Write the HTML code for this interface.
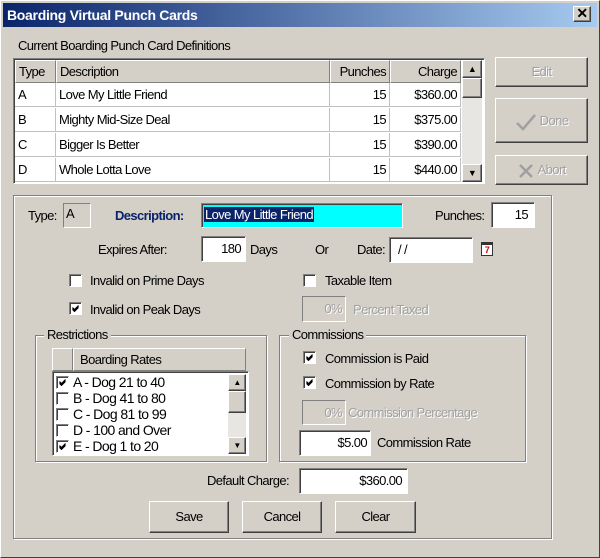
<!DOCTYPE html>
<html><head><style>
*{box-sizing:border-box;margin:0;padding:0}
body{width:600px;height:558px;background:#d4d0c8;font-family:"Liberation Sans",sans-serif;font-size:13px;letter-spacing:-0.6px;color:#000;position:relative;overflow:hidden}
.a{position:absolute;white-space:nowrap}
.win{position:absolute;left:0;top:0;width:600px;height:558px;border:1px solid #fff;border-right-color:#404040;border-bottom-color:#404040}
.title{left:3px;top:3px;width:594px;height:24px;background:linear-gradient(90deg,#0a246a,#a6caf0);color:#fff;font-weight:bold;font-size:14px;line-height:24px;padding-left:4px;letter-spacing:-0.3px}
.btn{position:absolute;background:#d4d0c8;border:1px solid;border-color:#fff #404040 #404040 #fff;box-shadow:inset -1px -1px #808080;text-align:center}
.sunk{position:absolute;background:#fff;border:1px solid;border-color:#808080 #fff #fff #808080;box-shadow:inset 1px 1px #404040}
.grp{position:absolute;border:1px solid #808080;box-shadow:1px 1px #fff,inset 1px 1px #fff}
.cb{position:absolute;width:13px;height:13px;background:#fff;border:1px solid;border-color:#808080 #fff #fff #808080;box-shadow:inset 1px 1px #404040}
.cb svg{position:absolute;left:2px;top:2px}
.dis{color:#a0a0a0;text-shadow:1px 1px #fff}
.cell{position:absolute;height:24px;line-height:24px;padding:0 3px;border-right:1px solid #c0c0c0;border-bottom:1px solid #c0c0c0}
.hd{position:absolute;height:23px;line-height:22px;padding:0 3px;background:#d4d0c8;border:1px solid;border-color:#fff #808080 #808080 #fff}
.li{position:absolute;left:56px;width:170px;height:16px;line-height:16px;font-size:14px;white-space:nowrap}
.li .cb{position:absolute;left:0;top:2px}
.li span{position:absolute;left:17px;top:0}
</style></head><body>
<svg width="0" height="0" style="position:absolute"><defs><path id="ck" d="M0.5 3.5 L2.5 5.5 L6.5 1.5 M0.5 4.5 L2.5 6.5 L6.5 2.5 M0.5 2.5 L2.5 4.5 L6.5 0.5" stroke="#000" fill="none" stroke-width="1"/></defs></svg>
<div class="win"></div>
<div class="a title">Boarding Virtual Punch Cards</div>
<div class="btn" style="left:573px;top:6px;width:18px;height:16px;font-size:14px;line-height:13px;font-weight:bold">✕</div>

<div class="a" style="left:18px;top:38px">Current Boarding Punch Card Definitions</div>
<div class="sunk" style="left:13px;top:58px;width:472px;height:126px"></div>
<div class="hd" style="left:15px;top:60px;width:41px">Type</div>
<div class="hd" style="left:56px;top:60px;width:274px">Description</div>
<div class="hd" style="left:330px;top:60px;width:60px;text-align:right">Punches</div>
<div class="hd" style="left:390px;top:60px;width:71px;text-align:right">Charge</div>
<div class="cell" style="left:15px;top:83px;width:41px">A</div><div class="cell" style="left:56px;top:83px;width:274px">Love My Little Friend</div><div class="cell" style="left:330px;top:83px;width:60px;text-align:right">15</div><div class="cell" style="left:390px;top:83px;width:71px;text-align:right">$360.00</div>
<div class="cell" style="left:15px;top:108px;width:41px">B</div><div class="cell" style="left:56px;top:108px;width:274px">Mighty Mid-Size Deal</div><div class="cell" style="left:330px;top:108px;width:60px;text-align:right">15</div><div class="cell" style="left:390px;top:108px;width:71px;text-align:right">$375.00</div>
<div class="cell" style="left:15px;top:133px;width:41px">C</div><div class="cell" style="left:56px;top:133px;width:274px">Bigger Is Better</div><div class="cell" style="left:330px;top:133px;width:60px;text-align:right">15</div><div class="cell" style="left:390px;top:133px;width:71px;text-align:right">$390.00</div>
<div class="cell" style="left:15px;top:158px;width:41px">D</div><div class="cell" style="left:56px;top:158px;width:274px">Whole Lotta Love</div><div class="cell" style="left:330px;top:158px;width:60px;text-align:right">15</div><div class="cell" style="left:390px;top:158px;width:71px;text-align:right">$440.00</div>
<div class="a" style="left:462px;top:60px;width:20px;height:122px;background:#e8e6e2"></div>
<div class="btn" style="left:462px;top:60px;width:20px;height:18px;font-size:9px;line-height:16px">▲</div>
<div class="btn" style="left:462px;top:78px;width:20px;height:20px"></div>
<div class="btn" style="left:462px;top:164px;width:20px;height:18px;font-size:9px;line-height:16px">▼</div>

<div class="btn dis" style="left:495px;top:57px;width:93px;height:30px;line-height:28px">Edit</div>
<div class="btn dis" style="left:495px;top:98px;width:93px;height:45px;line-height:43px"><svg width="22" height="20" viewBox="0 0 22 20" style="vertical-align:middle"><path d="M2 11 L8 17 L20 3" stroke="#a0a0a0" stroke-width="2.5" fill="none"/></svg> Done</div>
<div class="btn dis" style="left:495px;top:155px;width:93px;height:30px;line-height:28px"><svg width="18" height="18" viewBox="0 0 18 18" style="vertical-align:middle"><path d="M3 3 L15 15 M15 3 L3 15" stroke="#a0a0a0" stroke-width="2.5" fill="none"/></svg> Abort</div>

<div class="grp" style="left:13px;top:195px;width:539px;height:344px"></div>
<div class="a" style="left:28px;top:208px">Type:</div>
<div class="a" style="left:63px;top:203px;width:28px;height:25px;border:1px solid;border-color:#808080 #fff #fff #808080;padding:2px 2px">A</div>
<div class="a" style="left:115px;top:208px;font-weight:bold;color:#0a246a">Description:</div>
<div class="sunk" style="left:201px;top:203px;width:202px;height:25px;background:#00ffff"></div>
<div class="a" style="left:204px;top:207px;background:#0a246a;color:#fff;padding:0 1px">Love My Little Friend</div>
<div class="a" style="left:435px;top:208px">Punches:</div>
<div class="sunk" style="left:491px;top:202px;width:44px;height:26px;text-align:right;padding:4px 6px">15</div>

<div class="a" style="left:98px;top:242px">Expires After:</div>
<div class="sunk" style="left:201px;top:236px;width:45px;height:26px;text-align:right;padding:4px 4px">180</div>
<div class="a" style="left:250px;top:242px">Days</div>
<div class="a" style="left:315px;top:242px">Or</div>
<div class="a" style="left:357px;top:242px">Date:</div>
<div class="sunk" style="left:389px;top:237px;width:84px;height:26px;padding:4px 8px">/ /</div>
<div class="a" style="left:481px;top:242px;width:12px;height:14px;background:#fff;border:1px solid #333;border-top:3px solid #333;color:#c00;font-size:9px;font-weight:bold;text-align:center;line-height:10px">7</div>

<div class="cb" style="left:69px;top:274px"></div><div class="a" style="left:90px;top:273px">Invalid on Prime Days</div>
<div class="cb" style="left:69px;top:302px"><svg width="7" height="7"><use href="#ck"/></svg></div><div class="a" style="left:90px;top:302px">Invalid on Peak Days</div>
<div class="cb" style="left:303px;top:274px"></div><div class="a" style="left:325px;top:273px">Taxable Item</div>
<div class="a dis" style="left:302px;top:296px;width:44px;height:26px;border:1px solid;border-color:#808080 #fff #fff #808080;text-align:right;padding:4px 3px">0%</div>
<div class="a dis" style="left:353px;top:302px">Percent Taxed</div>

<div class="grp" style="left:35px;top:335px;width:232px;height:127px"></div>
<div class="a" style="left:44px;top:327px;background:#d4d0c8;padding:0 3px">Restrictions</div>
<div class="hd" style="left:52px;top:348px;width:21px"></div>
<div class="hd" style="left:73px;top:348px;width:173px">&nbsp;Boarding Rates</div>
<div class="sunk" style="left:52px;top:371px;width:197px;height:85px"></div>
<div class="li" style="top:374px"><div class="cb"><svg width="7" height="7"><use href="#ck"/></svg></div><span>A - Dog 21 to 40</span></div>
<div class="li" style="top:390px"><div class="cb"></div><span>B - Dog 41 to 80</span></div>
<div class="li" style="top:406px"><div class="cb"></div><span>C - Dog 81 to 99</span></div>
<div class="li" style="top:422px"><div class="cb"></div><span>D - 100 and Over</span></div>
<div class="li" style="top:438px"><div class="cb"><svg width="7" height="7"><use href="#ck"/></svg></div><span>E - Dog 1 to 20</span></div>
<div class="a" style="left:228px;top:374px;width:18px;height:80px;background:#e8e6e2"></div>
<div class="btn" style="left:228px;top:374px;width:18px;height:17px;font-size:8px;line-height:15px">▲</div>
<div class="btn" style="left:228px;top:391px;width:18px;height:22px"></div>
<div class="btn" style="left:228px;top:437px;width:18px;height:17px;font-size:8px;line-height:15px">▼</div>

<div class="grp" style="left:279px;top:335px;width:247px;height:127px"></div>
<div class="a" style="left:289px;top:327px;background:#d4d0c8;padding:0 3px">Commissions</div>
<div class="cb" style="left:303px;top:351px"><svg width="7" height="7"><use href="#ck"/></svg></div><div class="a" style="left:325px;top:351px">Commission is Paid</div>
<div class="cb" style="left:303px;top:376px"><svg width="7" height="7"><use href="#ck"/></svg></div><div class="a" style="left:325px;top:376px">Commission by Rate</div>
<div class="a dis" style="left:302px;top:400px;width:44px;height:25px;border:1px solid;border-color:#808080 #fff #fff #808080;text-align:right;padding:4px 3px">0%</div>
<div class="a dis" style="left:348px;top:405px">Commission Percentage</div>
<div class="sunk" style="left:299px;top:430px;width:72px;height:26px;text-align:right;padding:4px 3px">$5.00</div>
<div class="a" style="left:377px;top:435px">Commission Rate</div>

<div class="a" style="left:207px;top:473px">Default Charge:</div>
<div class="sunk" style="left:299px;top:468px;width:109px;height:26px;text-align:right;padding:4px 5px">$360.00</div>

<div class="btn" style="left:149px;top:501px;width:80px;height:32px;line-height:30px">Save</div>
<div class="btn" style="left:242px;top:501px;width:80px;height:32px;line-height:30px">Cancel</div>
<div class="btn" style="left:335px;top:501px;width:81px;height:32px;line-height:30px">Clear</div>
</body></html>
